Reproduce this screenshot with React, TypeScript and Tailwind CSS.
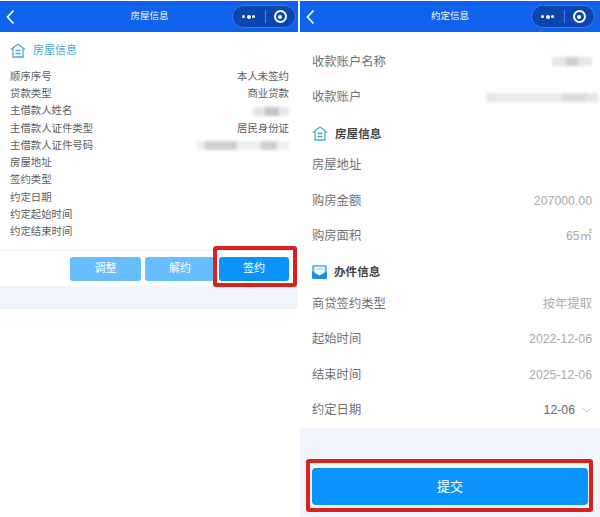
import React from 'react';

const font = { fontFamily: '"Liberation Sans", "Noto Sans CJK SC", sans-serif' };

const Header: React.FC<{ title: string; titleClass: string; padClass: string }> = ({ title, titleClass, padClass }) => (
  <div className={`h-[31px] mt-px bg-[#0f62ec] flex items-center justify-between pl-[6px] shrink-0 ${padClass}`}>
    <svg width="9" height="16" viewBox="0 0 9 16" fill="none" stroke="#fff" strokeWidth="1.7">
      <path d="M7.5 1.5 1.5 8l6 6.5" />
    </svg>
    <span className={`text-white text-[9.5px] ${titleClass}`}>{title}</span>
    <div className="w-[64px] h-[23px] rounded-full bg-[#0b46b0] border border-[#3f7cf0] flex items-center">
      <div className="w-[32px] flex items-center justify-center gap-[1.5px]">
        <span className="w-[3px] h-[3px] rounded-full bg-white" />
        <span className="w-[4px] h-[4px] rounded-full bg-white" />
        <span className="w-[3px] h-[3px] rounded-full bg-white" />
      </div>
      <div className="w-px h-[13px] bg-[#4d82e6]" />
      <div className="flex-1 flex items-center justify-center">
        <span className="w-[13px] h-[13px] rounded-full border-2 border-white flex items-center justify-center">
          <span className="w-[4px] h-[4px] rounded-full bg-white" />
        </span>
      </div>
    </div>
  </div>
);

const HomeIcon: React.FC = () => (
  <svg width="16" height="15" viewBox="0 0 16 15" fill="none" stroke="#4aa8d8" strokeWidth="1.3">
    <path d="M1 6.5 8 1l7 5.5" />
    <path d="M3 5.5V14h10V5.5" />
    <path d="M5.5 7.5h5M5.5 10.5h5" />
  </svg>
);

const MailIcon: React.FC = () => (
  <svg width="15" height="14" viewBox="0 0 15 14">
    <path d="M0 1.5A1.5 1.5 0 0 1 1.5 0h12A1.5 1.5 0 0 1 15 1.5V7H0z" fill="#6cc0ee" />
    <path d="M2.5 2h10v5l-5 3-5-3z" fill="#fff" />
    <path d="M4 3.5h7v1H4z" fill="#6cc0ee" />
    <path d="M0 6l7.5 4.5L15 6v6.5A1.5 1.5 0 0 1 13.5 14h-12A1.5 1.5 0 0 1 0 12.5z" fill="#1b8fe0" />
  </svg>
);

// blurred-out personal data, a few grey patches next to each other
const Smudge: React.FC<{ parts: [number, string][] }> = ({ parts }) => (
  <div className="flex items-center blur-[1.5px]">
    {parts.map(([w, color], i) => (
      <div key={i} className="h-[9px]" style={{ width: w, backgroundColor: color }} />
    ))}
  </div>
);

const infoRows: [string, React.ReactNode][] = [
  ['顺序序号', '本人未签约'],
  ['贷款类型', '商业贷款'],
  ['主借款人姓名', <Smudge parts={[[12, '#e4e4e4'], [14, '#c4c4c4'], [10, '#e8e8e8']]} />],
  ['主借款人证件类型', '居民身份证'],
  ['主借款人证件号码', <Smudge parts={[[8, '#ececec'], [32, '#cfcfcf'], [24, '#eeeeee'], [16, '#cfcfcf'], [12, '#eeeeee']]} />],
  ['房屋地址', null],
  ['签约类型', null],
  ['约定日期', null],
  ['约定起始时间', null],
  ['约定结束时间', null],
];

const Row: React.FC<{ label: string; children?: React.ReactNode }> = ({ label, children }) => (
  <div className="h-[35.5px] flex items-center justify-between text-[12.3px] text-[#707070]">
    <span>{label}</span>
    <div className="text-[#ababab] flex items-center">{children}</div>
  </div>
);

const SectionTitle: React.FC<{ icon: React.ReactNode; title: string; className: string }> = ({ icon, title, className }) => (
  <div className={`h-[28.5px] flex items-center gap-[7px] text-[11.6px] font-bold text-[#444] ${className}`}>
    {icon}
    <span>{title}</span>
  </div>
);

export default function App() {
  return (
    <div className="relative w-[600px] h-[517px] bg-white flex justify-between overflow-hidden" style={font}>
      <div className="w-[298px] flex flex-col">
        <Header title="房屋信息" titleClass="ml-[52px]" padClass="pr-[2px]" />
        <div className="h-[219px] px-[10px] pr-[9px] pt-[8px] border-b border-[#eee]">
          <div className="flex items-center gap-[7px] h-[20px] text-[11px] text-[#4aa8d8]">
            <HomeIcon />
            <span>房屋信息</span>
          </div>
          <div className="mt-[8px]">
            {infoRows.map(([label, value]) => (
              <div key={label} className="h-[17.25px] flex items-center justify-between text-[10.4px] text-[#5c5c5c]">
                <span>{label}</span>
                <span>{value}</span>
              </div>
            ))}
          </div>
        </div>
        <div className="h-[35px] flex items-center justify-end gap-[4px] pr-[9px] text-[11px] text-white">
          <div className="w-[71px] h-[24px] rounded-[3px] bg-[#66bdff] flex items-center justify-center">调整</div>
          <div className="w-[70px] h-[24px] rounded-[3px] bg-[#66bdff] flex items-center justify-center">解约</div>
          <div className="w-[70px] h-[24px] rounded-[3px] bg-[#0a94fb] flex items-center justify-center">签约</div>
        </div>
        <div className="h-[23px] bg-[#f0f5fb]" />
      </div>

      <div className="w-[300px] flex flex-col">
        <Header title="约定信息" titleClass="ml-[54px]" padClass="pr-[5px]" />
        <div className="h-[396px] pl-[12px] pr-[8px] pt-[12px]">
          <Row label="收款账户名称">
            <Smudge parts={[[14, '#e6e6e6'], [12, '#cdcdcd'], [14, '#e8e8e8']]} />
          </Row>
          <Row label="收款账户">
            <div className="-mr-[6px]">
              <Smudge parts={[[10, '#e6e6e6'], [66, '#ececec'], [24, '#dcdcdc'], [12, '#e6e6e6']]} />
            </div>
          </Row>
          <SectionTitle icon={<HomeIcon />} title="房屋信息" className="mt-[4px]" />
          <Row label="房屋地址" />
          <Row label="购房金额">207000.00</Row>
          <Row label="购房面积">65㎡</Row>
          <SectionTitle icon={<MailIcon />} title="办件信息" className="mt-[3.5px]" />
          <Row label="商贷签约类型">按年提取</Row>
          <Row label="起始时间">2022-12-06</Row>
          <Row label="结束时间">2025-12-06</Row>
          <Row label="约定日期">
            <span className="text-[#666]">12-06</span>
            <svg className="ml-[7px]" width="10" height="6" viewBox="0 0 10 6" fill="none" stroke="#ccc">
              <path d="M1 1l4 4 4-4" />
            </svg>
          </Row>
        </div>
        <div className="flex-1 bg-[#f0f5fb] px-[12px] pt-[40px]">
          <div className="w-[276px] h-[37px] rounded-[4px] bg-[#0a94fb] text-white text-[13px] flex items-center justify-center">
            提交
          </div>
        </div>
      </div>

      {/* annotation boxes */}
      <div className="absolute left-[213px] top-[246px] w-[84px] h-[41px] rounded-[3px] border-[4px] border-[#d9211e]" />
      <div className="absolute left-[306px] top-[459px] w-[287px] h-[53px] rounded-[3px] border-[4px] border-[#d9211e]" />
    </div>
  );
}
